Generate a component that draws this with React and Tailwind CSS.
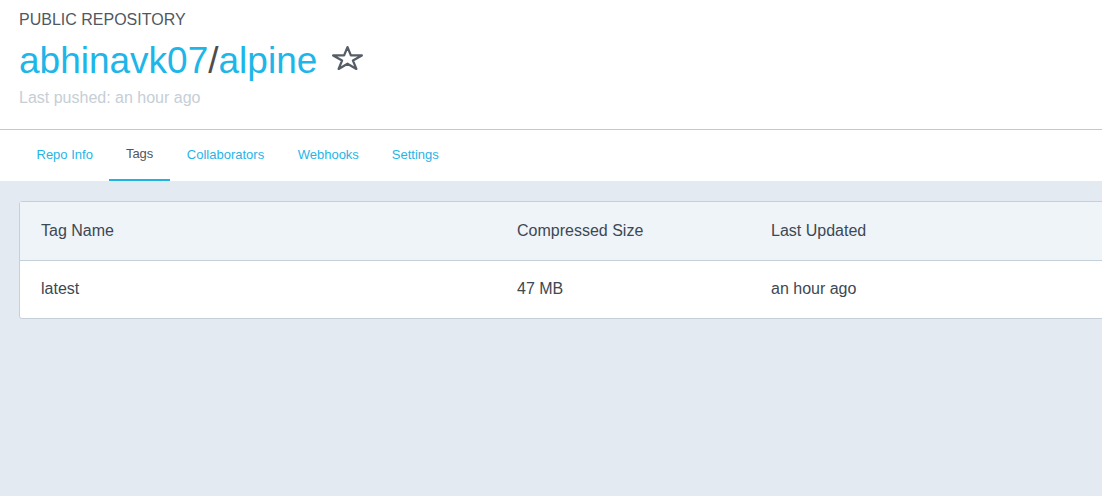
import React from "react";

const font = { fontFamily: '"Liberation Sans", Arial, sans-serif' };

function StarIcon() {
  return (
    <svg width="32" height="28" viewBox="0 0 32 28" className="ml-[15px] self-start mt-[5px]" aria-hidden="true">
      <polygon
        points="15.5,3.1 18.88,11.43 29.83,11.43 20.97,16.57 24.35,24.9 15.5,19.75 6.65,24.9 10.03,16.57 1.17,11.43 12.12,11.43"
        fill="none"
        stroke="#555d66"
        strokeWidth="2.3"
        strokeLinejoin="round"
      />
    </svg>
  );
}

const tabs = ["Repo Info", "Tags", "Collaborators", "Webhooks", "Settings"];

export default function App() {
  return (
    <div className="min-h-screen w-full overflow-hidden flex flex-col bg-[#e3eaf1]" style={font}>
      <div className="bg-white border-b border-[#c4c8cc]">
        <div className="h-[129px] px-[19px] pt-[10px]">
          <div className="text-[16px] leading-[20px] text-[#50585f]">PUBLIC REPOSITORY</div>
          <div className="mt-[9px] flex items-center h-[44px]">
            <span className="text-[37px] leading-[44px] text-[#1eb6e8]">
              abhinavk07<span className="text-[#4d4d4d]">/</span>alpine
            </span>
            <StarIcon />
          </div>
          <div className="mt-[5px] text-[16px] leading-[20px] text-[#c6ced6]">Last pushed: an hour ago</div>
        </div>
      </div>
      <div className="bg-white h-[51px] flex pl-[20px]">
        {tabs.map((t) => (
          <div
            key={t}
            className={
              t === "Tags"
                ? "h-[51px] leading-[48px] px-[16.5px] text-[13px] text-[#555] border-b-2 border-[#22b2e0]"
                : t === "Collaborators"
                ? "h-[51px] leading-[50px] pl-[17px] pr-[17px] text-[13px] text-[#1fb5e8]"
                : "h-[51px] leading-[50px] px-[16.5px] text-[13px] text-[#1fb5e8]"
            }
          >
            {t}
          </div>
        ))}
      </div>
      <div className="flex-1 pt-[20px] pl-[19px]">
        <div className="w-[1110px] bg-white border border-[#c6d0da] rounded-[3px] text-[16px] text-[#3c4852]">
          <div className="h-[59px] bg-[#eff4f9] border-b border-[#c6d0da] flex items-center pl-[21px]">
            <div className="w-[476px]">Tag Name</div>
            <div className="w-[254px]">Compressed Size</div>
            <div>Last Updated</div>
          </div>
          <div className="h-[57px] flex items-center pl-[21px] pb-[2px]">
            <div className="w-[476px]">latest</div>
            <div className="w-[254px]">47 MB</div>
            <div>an hour ago</div>
          </div>
        </div>
      </div>
    </div>
  );
}
